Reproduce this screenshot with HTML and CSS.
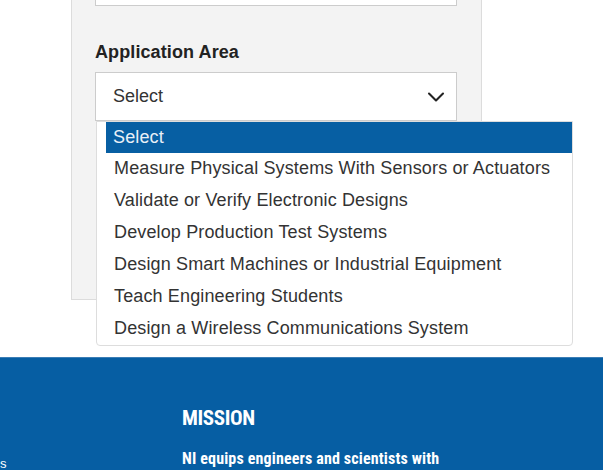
FILE: index.html
```html
<!DOCTYPE html>
<html lang="en">
<head>
<meta charset="utf-8">
<title>Application Area</title>
<link rel="stylesheet" href="styles.css">
</head>
<body>
<div class="page">
  <div class="panel">
    <div class="field-stub"></div>
    <label class="field-label">Application Area</label>
    <div class="select-box">
      <span class="select-value">Select</span>
      <svg class="chevron" width="18" height="12" viewBox="0 0 18 12" aria-hidden="true">
        <path d="M2 2.5 L9 9.5 L16 2.5" fill="none" stroke="#222" stroke-width="2.1" stroke-linecap="round" stroke-linejoin="round"/>
      </svg>
    </div>
    <ul class="options">
      <li class="option selected">Select</li>
      <li class="option">Measure Physical Systems With Sensors or Actuators</li>
      <li class="option">Validate or Verify Electronic Designs</li>
      <li class="option">Develop Production Test Systems</li>
      <li class="option">Design Smart Machines or Industrial Equipment</li>
      <li class="option">Teach Engineering Students</li>
      <li class="option">Design a Wireless Communications System</li>
    </ul>
  </div>
  <footer class="footer">
    <span class="footer-cut">s</span>
    <div class="mission">
      <h2 class="mission-title">MISSION</h2>
      <p class="mission-text">NI equips engineers and scientists with</p>
    </div>
  </footer>
</div>
</body>
</html>
```
FILE: styles.css
```css
html, body {
  margin: 0;
  padding: 0;
  background: #ffffff;
  font-family: "Liberation Sans", Arial, sans-serif;
  color: #333333;
}

.page {
  width: 603px;
  height: 470px;
  overflow: hidden;
  display: flex;
  flex-direction: column;
}

.panel {
  position: relative;
  margin-left: 71px;
  width: 363px;
  height: 299px;
  background: #f3f3f3;
  border: 1px solid #dcdcdc;
  border-top: none;
  padding: 0 23px;
  display: flex;
  flex-direction: column;
  align-items: flex-start;
}

.field-stub {
  width: 360px;
  height: 5px;
  background: #ffffff;
  border: 1px solid #cccccc;
  border-top: none;
}

.field-label {
  margin-top: 35px;
  font-size: 18px;
  font-weight: bold;
  line-height: 22px;
  letter-spacing: 0.1px;
  color: #222222;
}

.select-box {
  margin-top: 9px;
  width: 332px;
  height: 47px;
  background: #ffffff;
  border: 1px solid #cccccc;
  display: flex;
  align-items: center;
  justify-content: space-between;
  padding: 0 11px 0 17px;
}

.select-value {
  font-size: 18px;
  color: #333333;
}

.chevron {
  display: block;
  margin-top: 1px;
}

.options {
  position: absolute;
  top: 121px;
  left: 24px;
  width: 466px;
  margin: 0;
  padding: 0 0 0 9px;
  list-style: none;
  background: #ffffff;
  border: 1px solid #dddddd;
  border-radius: 0 0 4px 4px;
  z-index: 2;
}

.option {
  height: 32px;
  line-height: 31px;
  padding-left: 8px;
  font-size: 18px;
  letter-spacing: 0.14px;
  color: #333333;
  white-space: nowrap;
}

.option.selected {
  background: #075fa3;
  color: #e9f0f7;
  padding-left: 7px;
  height: 31px;
}

.footer {
  position: relative;
  margin-top: 57px;
  flex: 1;
  background: #065ea3;
  border-top: 1px solid #3b7db5;
  display: flex;
  padding-left: 182px;
}

.footer-cut {
  position: absolute;
  left: 0;
  top: 98px;
  font-size: 13px;
  color: #ffffff;
}

.mission {
  padding-top: 48px;
  color: #ffffff;
}

.mission-title {
  margin: 0;
  font-family: "Liberation Sans Narrow", "Roboto", sans-serif;
  font-stretch: condensed;
  font-size: 21px;
  font-weight: bold;
  line-height: 24px;
  letter-spacing: -0.4px;
}

.mission-text {
  margin: 19px 0 0;
  font-family: "Liberation Sans Narrow", "Roboto", sans-serif;
  font-stretch: condensed;
  font-size: 16px;
  font-weight: bold;
  line-height: 20px;
  letter-spacing: 0.15px;
}
```
